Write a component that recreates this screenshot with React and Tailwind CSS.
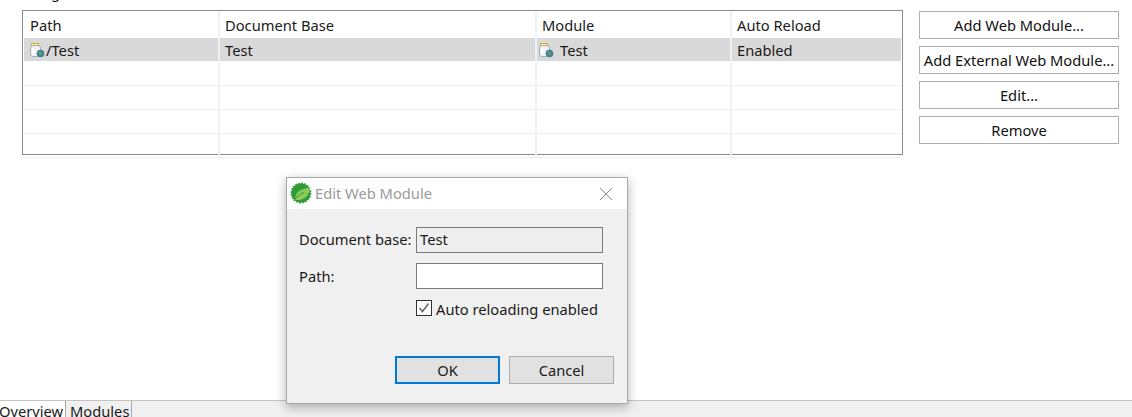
const ServerIcon = () => (
  <svg width="16" height="16" viewBox="0 0 16 16" className="shrink-0">
    <rect x="1.5" y="3.5" width="10" height="11" rx="2.5" fill="#eef2f6" stroke="#a3b0bb" />
    <rect x="2.5" y="1.5" width="7" height="2" fill="#fff8dc" stroke="#c8a850" strokeWidth="1" />
    <path d="M3 6h2v6H3z" fill="#ffffff" />
    <circle cx="11.500" cy="11.500" r="3.800" fill="#3f7f9f" />
    <path d="M9.500 10.500c1-1.200 2.200-1.200 3 0 .6 1 .2 2.200-.8 3-1-.4-1.800-1.500-2.200-3z" fill="#74a84a" />
  </svg>
);

const SpringLogo = () => (
  <svg width="22" height="22" viewBox="0 0 22 22" className="shrink-0">
    <circle cx="11" cy="11" r="9.600" fill="#2f9a36" strokeDasharray="2 1" stroke="#3aa13c" strokeWidth="1.600" />
    <path d="M5 18c0-3 1-6 3-8 3-3 7-4 12-4-.5 5-3 9-7 11-2 1-5 1-8 1z" fill="#8bc95e" />
    <path d="M4 18.500c2.500-4 6-6.500 10-8" fill="none" stroke="#2f9a36" strokeWidth="1" />
  </svg>
);

const cols = ["w-[196px]", "w-[317px]", "w-[195px]", "flex-1"];

const Row = ({ cells, selected }) => (
  <div className={`flex h-6 border-b border-[#f0f0f0] ${selected ? "bg-[#d9d9d9] border-white" : ""}`}>
    {cols.map((c, i) => (
      <div key={c} className={`${c} flex items-center pl-[5px] ${i < 3 ? "border-r-2 border-[#edf1f8]" : ""}`}>
        {cells && cells[i]}
      </div>
    ))}
  </div>
);

const SideButton = ({ children }) => (
  <button className="h-7 w-[200px] border border-[#adadad] bg-white text-[14.7px] leading-none text-[#111]">{children}</button>
);

export default function App() {
  return (
    <div className="relative flex h-[417px] w-[1132px] flex-col overflow-hidden bg-white font-['Noto_Sans',sans-serif] text-[14.7px] text-[#1a1a1a]">
      <div className="-mt-[18px] h-5 pl-[15px] leading-5">Configure the Web Modules on this server</div>
      <div className="flex flex-1 items-start gap-4 pl-[22px] pt-2">
        <div className="h-[145px] w-[881px] border border-[#8a8a92] pl-px pr-px">
          <div className="flex h-[27px]">
            {["Path", "Document Base", "Module", "Auto Reload"].map((h, i) => (
              <div key={h} className={`${cols[i]} flex items-center pt-px ${i === 0 ? "pl-[6px]" : "pl-[5px]"} ${i < 3 ? "border-r-2 border-[#edf1f8]" : ""}`}>{h}</div>
            ))}
          </div>
          <Row
            selected
            cells={[
              <span className="flex items-center pt-px"><ServerIcon /><span className="ml-px">/Test</span></span>,
              <span className="pt-px">Test</span>,
              <span className="flex items-center pt-px -ml-[4px]"><ServerIcon /><span className="ml-[6px]">Test</span></span>,
              <span className="pt-px">Enabled</span>,
            ]}
          />
          <Row />
          <Row />
          <Row />
          <Row />
        </div>
        <div className="flex flex-col gap-[7px] pt-px">
          <SideButton>Add Web Module...</SideButton>
          <SideButton>Add External Web Module...</SideButton>
          <SideButton>Edit...</SideButton>
          <SideButton>Remove</SideButton>
        </div>
      </div>

      <div className="flex h-[17px] border-t border-[#c4c4c4] bg-[#f0f0f0]">
        <div className="-ml-[1px] h-full w-[67px] border-r border-[#a9a9a9] bg-white leading-[21px]">Overview</div>
        <div className="h-full w-[66px] border-r border-[#a9a9a9] bg-[#f0f0f0] pl-[4px] leading-[21px]">Modules</div>
      </div>

      <div className="absolute left-[286px] top-[177px] h-[227px] w-[342px] border border-[#a8a8a8] bg-[#f0f0f0] shadow-[0_3px_10px_rgba(0,0,0,0.3)]">
        <div className="flex h-[31px] items-center justify-between bg-white pl-[3px] pr-[14px]">
          <div className="flex items-center gap-[3px] text-[#9a9a9a]"><SpringLogo />Edit Web Module</div>
          <svg width="14" height="14" viewBox="0 0 14 14">
            <path d="M1 1l12 12M13 1L1 13" stroke="#8a8a8a" strokeWidth="1" />
          </svg>
        </div>
        <div className="flex flex-col gap-[10px] pl-[12px] pr-[24px] pt-[18px]">
          <div className="flex items-center">
            <span className="w-[117px] pb-px">Document base:</span>
            <div className="flex h-[26px] flex-1 items-center border border-[#7a7a7a] bg-[#eeeeee] pb-px pl-[3px]">Test</div>
          </div>
          <div className="flex items-center">
            <span className="w-[117px] pt-px">Path:</span>
            <div className="h-[26px] flex-1 border border-[#7a7a7a] bg-white" />
          </div>
          <div className="mt-px flex h-[16px] items-center gap-[4px] pl-[117px]">
            <div className="flex h-[16px] w-[16px] items-center justify-center border border-[#333] bg-white">
              <svg width="12" height="12" viewBox="0 0 12 12">
                <path d="M1.500 6l3 3.500 6-8" fill="none" stroke="#666" strokeWidth="1.500" />
              </svg>
            </div>
            <span className="pt-[2px]">Auto reloading enabled</span>
          </div>
        </div>
        <div className="absolute bottom-[19px] right-[13px] flex gap-[9px]">
          <button className="h-7 w-[105px] border-2 border-[#0078d7] bg-[#e1e1e1]">OK</button>
          <button className="h-7 w-[105px] border border-[#adadad] bg-[#e1e1e1]">Cancel</button>
        </div>
      </div>
    </div>
  );
}
